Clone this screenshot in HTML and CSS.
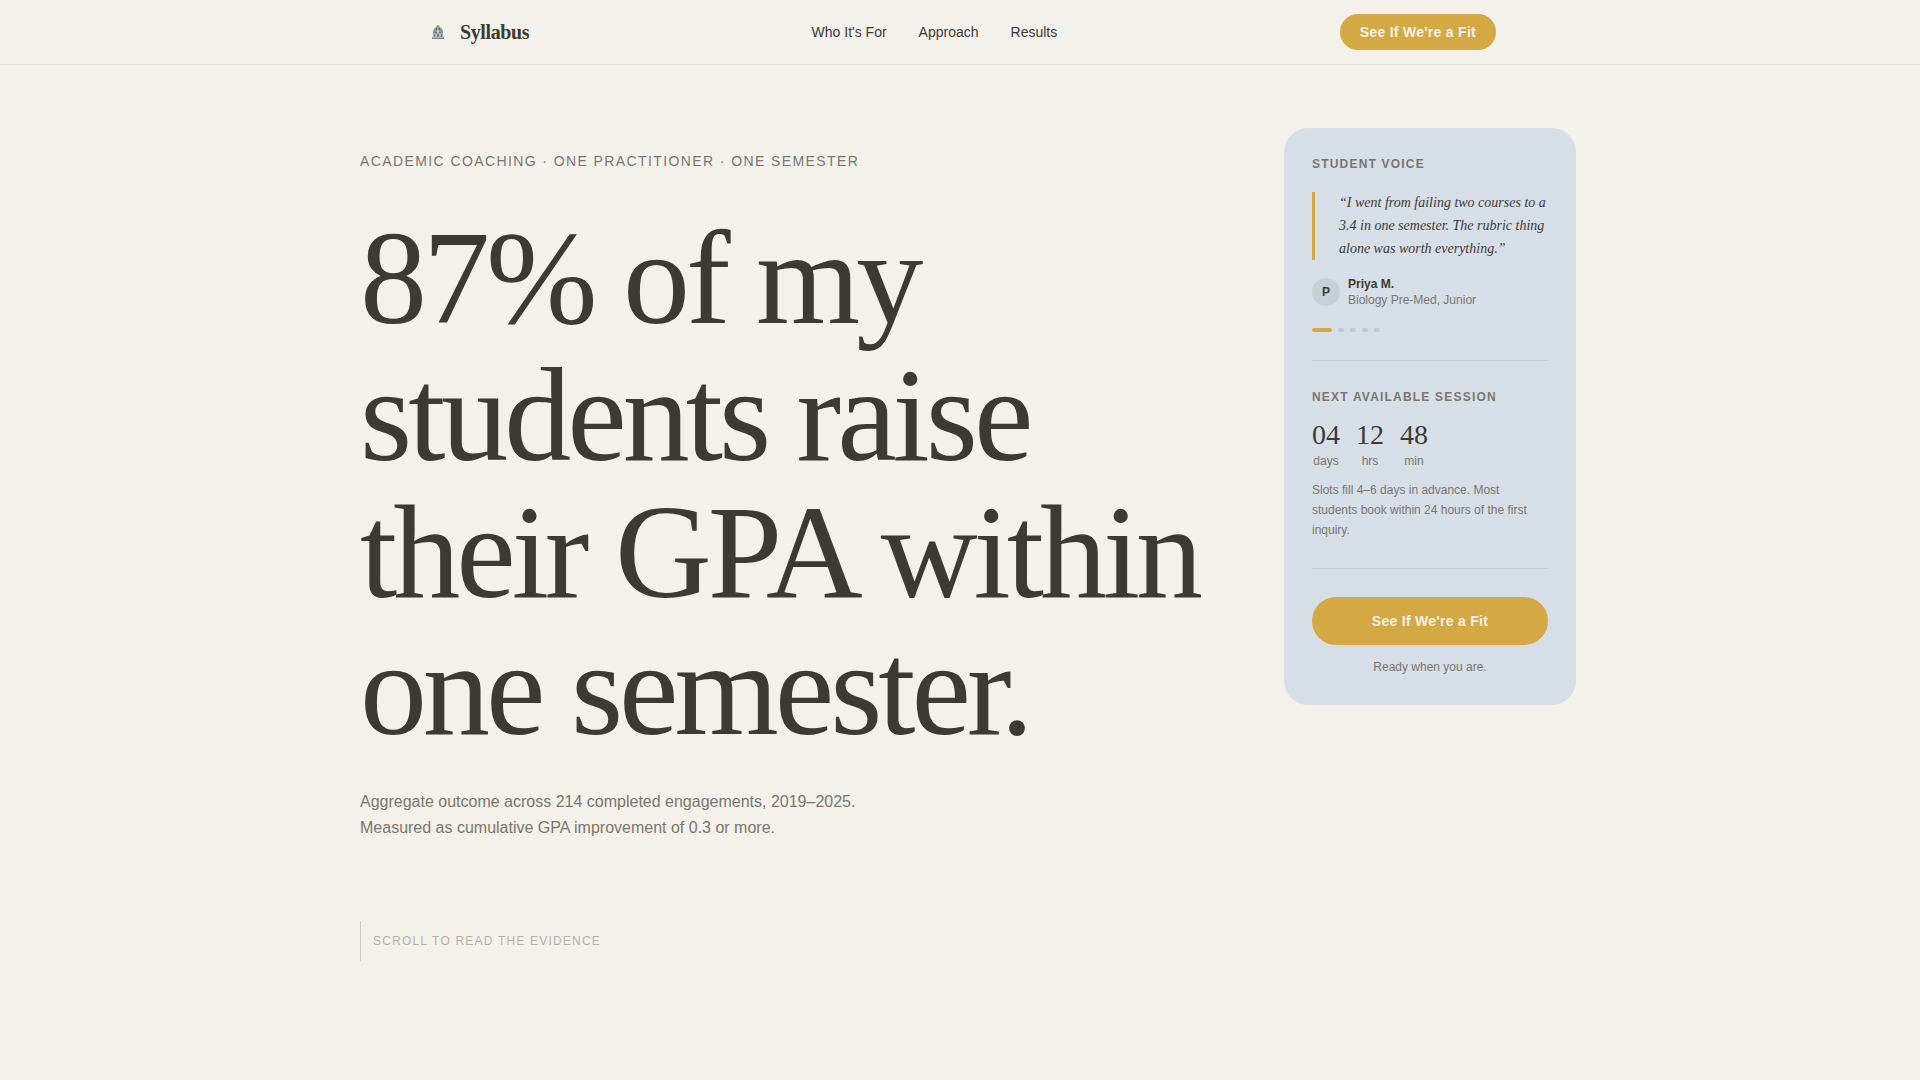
FILE: index.html
```html
<!DOCTYPE html>
<html lang="en">
<head>
    <meta charset="UTF-8">
    <meta name="viewport" content="width=device-width, initial-scale=1.0">
    <title>Syllabus | Academic Coaching</title>
    <link rel="stylesheet" href="styles.css">
</head>
<body>
    <header class="site-header">
        <div class="header-inner">
            <a class="brand" href="#">
                <svg class="brand-mark" viewBox="0 0 28 28" aria-hidden="true">
                    <path fill="#a9b4bf" d="M8 19h12v1H8zM9 14h10v5H9z"/>
                    <path fill="#8b949d" d="M13 8h2l3 3 1 2v2H9v-2l1-2z"/>
                    <path fill="#b89a5c" d="M13 7h2v2h-2z"/>
                    <path fill="#66686b" d="M12 10h1v2h-1zM15 10h1v2h-1zM11 14h2v1h-2zM15 14h2v1h-2z"/>
                    <path fill="#85888b" d="M8 20h12v1H8z"/>
                    <path fill="#c4cedb" d="M13 12h2v3h-2zM12 17h1v2h-1zM15 17h1v2h-1z"/>
                    <path fill="#6f7c8b" d="M10 16h1v3h-1zM13 16h2v3h-2zM17 16h1v3h-1z"/>
                </svg>
                <span class="brand-name">Syllabus</span>
            </a>
            <nav class="main-nav">
                <a href="#who">Who It's For</a>
                <a href="#approach">Approach</a>
                <a href="#results">Results</a>
            </nav>
            <a class="btn btn-small" href="#fit">See If We're a Fit</a>
        </div>
    </header>

    <main class="hero">
        <section class="hero-content">
            <p class="eyebrow">Academic Coaching · One Practitioner · One Semester</p>
            <h1 class="headline">87% of my students raise their GPA within one semester.</h1>
            <p class="hero-note">Aggregate outcome across 214 completed engagements, 2019–2025. Measured as cumulative GPA improvement of 0.3 or more.</p>
            <p class="scroll-cue">Scroll to read the evidence</p>
        </section>

        <aside class="side-card">
            <section class="card-section">
                <h2 class="card-label">Student Voice</h2>
                <blockquote class="quote">“I went from failing two courses to a 3.4 in one semester. The rubric thing alone was worth everything.”</blockquote>
                <div class="author">
                    <span class="avatar">P</span>
                    <div>
                        <p class="author-name">Priya M.</p>
                        <p class="author-role">Biology Pre-Med, Junior</p>
                    </div>
                </div>
                <div class="dots">
                    <button class="dot active" aria-label="Quote 1"></button>
                    <button class="dot" aria-label="Quote 2"></button>
                    <button class="dot" aria-label="Quote 3"></button>
                    <button class="dot" aria-label="Quote 4"></button>
                    <button class="dot" aria-label="Quote 5"></button>
                </div>
            </section>

            <section class="card-section">
                <h2 class="card-label">Next Available Session</h2>
                <div class="countdown">
                    <div class="unit"><span class="unit-value">04</span><span class="unit-label">days</span></div>
                    <div class="unit"><span class="unit-value">12</span><span class="unit-label">hrs</span></div>
                    <div class="unit"><span class="unit-value">48</span><span class="unit-label">min</span></div>
                </div>
                <p class="slots">Slots fill 4–6 days in advance. Most students book within 24 hours of the first inquiry.</p>
            </section>

            <section class="card-section">
                <a class="btn btn-large" href="#fit">See If We're a Fit</a>
                <p class="ready">Ready when you are.</p>
            </section>
        </aside>
    </main>
</body>
</html>
```
FILE: styles.css
```css
* {
    margin: 0;
    padding: 0;
    box-sizing: border-box;
}

:root {
    --bg: #f4f1ea;
    --ink: #3d3a35;
    --muted: #7a766f;
    --gold: #d4a843;
    --blue: #d6dee7;
    --serif: "Liberation Serif", Georgia, serif;
    --sans: "Liberation Sans", Arial, sans-serif;
}

body {
    font-family: var(--sans);
    background: var(--bg);
    color: var(--ink);
    min-height: 100vh;
}

a {
    color: inherit;
    text-decoration: none;
}

/* Header */
.site-header {
    border-bottom: 1px solid #e4e1da;
}

.header-inner {
    max-width: 1200px;
    min-height: 64px;
    margin: 0 auto;
    padding: 0 64px;
    display: flex;
    align-items: center;
    justify-content: space-between;
}

.brand {
    display: flex;
    align-items: center;
    gap: 8px;
}

.brand-mark {
    width: 28px;
    height: 28px;
}

.brand-name {
    font-family: var(--serif);
    font-size: 20px;
    font-weight: 700;
    letter-spacing: -0.02em;
}

.main-nav {
    display: flex;
    gap: 32px;
    font-size: 14px;
}

.btn {
    display: block;
    background: var(--gold);
    color: var(--bg);
    font-size: 14px;
    font-weight: 700;
    letter-spacing: 0.02em;
    text-align: center;
    border-radius: 24px;
}

.btn-small {
    padding: 8px 20px;
    line-height: 20px;
}

.btn-large {
    padding: 16px 20px;
    line-height: 16px;
}

/* Hero */
.hero {
    max-width: 1280px;
    margin: 0 auto;
    padding: 63px 24px 64px 40px;
    display: grid;
    grid-template-columns: 1fr 292px;
    gap: 64px;
    align-items: start;
}

.hero-content {
    padding-top: 24px;
}

.eyebrow {
    font-size: 14px;
    line-height: 18px;
    letter-spacing: 0.1em;
    text-transform: uppercase;
    color: var(--muted);
    margin-bottom: 40px;
}

.headline {
    font-family: var(--serif);
    font-size: 134px;
    font-weight: 400;
    line-height: 137px;
    letter-spacing: -0.03em;
    margin-bottom: 31px;
}

.hero-note {
    max-width: 520px;
    font-size: 16px;
    line-height: 26px;
    color: var(--muted);
    margin-bottom: 80px;
}

.scroll-cue {
    padding-left: 12px;
    border-left: 1px solid #cfcbc3;
    font-size: 12px;
    line-height: 40px;
    letter-spacing: 0.1em;
    text-transform: uppercase;
    color: #b5b1a9;
}

/* Side card */
.side-card {
    background: var(--blue);
    border: 1px solid #dcdfe2;
    border-radius: 24px;
    padding: 27px;
}

.card-section + .card-section {
    border-top: 1px solid #c6ccd4;
    margin-top: 28px;
    padding-top: 28px;
}

.card-label {
    font-size: 12px;
    line-height: 16px;
    letter-spacing: 0.1em;
    text-transform: uppercase;
    color: var(--muted);
}

.quote {
    margin: 20px 0 16px;
    padding-left: 24px;
    border-left: 3px solid var(--gold);
    font-family: var(--serif);
    font-size: 14px;
    font-style: italic;
    line-height: 1.63;
}

.author {
    display: flex;
    align-items: center;
    gap: 8px;
    font-size: 12px;
    line-height: 16px;
}

.avatar {
    width: 28px;
    height: 28px;
    border-radius: 50%;
    background: #c8d0d7;
    font-weight: 700;
    line-height: 28px;
    text-align: center;
}

.author-name {
    font-weight: 700;
}

.author-role,
.unit-label,
.slots,
.ready {
    font-size: 12px;
    color: var(--muted);
}

.dots {
    display: flex;
    gap: 6px;
    margin-top: 20px;
}

.dot {
    width: 6px;
    height: 4px;
    border: 0;
    border-radius: 2px;
    background: #c5c8ca;
}

.dot.active {
    width: 20px;
    background: var(--gold);
}

.countdown {
    display: flex;
    gap: 16px;
    margin: 16px 0 12px;
}

.unit {
    display: flex;
    flex-direction: column;
    align-items: center;
    gap: 4px;
}

.unit-value {
    font-family: var(--serif);
    font-size: 28px;
    line-height: 28px;
}

.unit-label {
    line-height: 16px;
}

.slots {
    line-height: 1.63;
}

.ready {
    margin-top: 12px;
    line-height: 20px;
    text-align: center;
}

@media (max-width: 1100px) {
    .hero {
        grid-template-columns: 1fr;
        padding-right: 40px;
    }

    .headline {
        font-size: 72px;
        line-height: 76px;
    }
}
```
